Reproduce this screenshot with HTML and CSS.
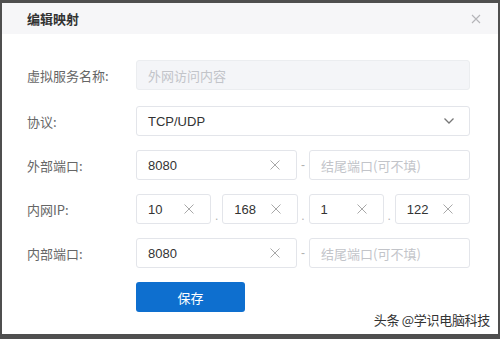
FILE: index.html
```html
<!DOCTYPE html>
<html lang="zh">
<head>
<meta charset="utf-8">
<title>编辑映射</title>
<link rel="stylesheet" href="styles.css">
</head>
<body>
<div class="modal">
  <div class="modal-header">
    <span class="modal-title">编辑映射</span>
    <svg class="close" width="10" height="10" viewBox="0 0 10 10"><path d="M1 1L9 9M9 1L1 9" stroke="#b5b5b8" stroke-width="1.1" fill="none"/></svg>
  </div>
  <div class="form">
    <div class="row row-first">
      <label class="label">虚拟服务名称:</label>
      <div class="field disabled"><span class="placeholder">外网访问内容</span></div>
    </div>
    <div class="row">
      <label class="label">协议:</label>
      <div class="field"><span class="value">TCP/UDP</span>
        <svg class="chev" width="12" height="8" viewBox="0 0 12 8"><path d="M1.5 1.5L6 6L10.5 1.5" stroke="#777" stroke-width="1.3" fill="none"/></svg>
      </div>
    </div>
    <div class="row">
      <label class="label">外部端口:</label>
      <div class="pair">
        <div class="field"><span class="value">8080</span><svg class="clear" width="10" height="10" viewBox="0 0 10 10"><path d="M0.5 0.5L9.5 9.5M9.5 0.5L0.5 9.5" stroke="#a8a8a8" stroke-width="1" fill="none"/></svg></div>
        <span class="sep dash">-</span>
        <div class="field"><span class="placeholder">结尾端口(可不填)</span></div>
      </div>
    </div>
    <div class="row">
      <label class="label">内网IP:</label>
      <div class="pair">
        <div class="field"><span class="value">10</span><svg class="clear" width="10" height="10" viewBox="0 0 10 10"><path d="M0.5 0.5L9.5 9.5M9.5 0.5L0.5 9.5" stroke="#a8a8a8" stroke-width="1" fill="none"/></svg></div>
        <span class="sep dot">.</span>
        <div class="field"><span class="value">168</span><svg class="clear" width="10" height="10" viewBox="0 0 10 10"><path d="M0.5 0.5L9.5 9.5M9.5 0.5L0.5 9.5" stroke="#a8a8a8" stroke-width="1" fill="none"/></svg></div>
        <span class="sep dot">.</span>
        <div class="field"><span class="value">1</span><svg class="clear" width="10" height="10" viewBox="0 0 10 10"><path d="M0.5 0.5L9.5 9.5M9.5 0.5L0.5 9.5" stroke="#a8a8a8" stroke-width="1" fill="none"/></svg></div>
        <span class="sep dot">.</span>
        <div class="field"><span class="value">122</span><svg class="clear" width="10" height="10" viewBox="0 0 10 10"><path d="M0.5 0.5L9.5 9.5M9.5 0.5L0.5 9.5" stroke="#a8a8a8" stroke-width="1" fill="none"/></svg></div>
      </div>
    </div>
    <div class="row">
      <label class="label">内部端口:</label>
      <div class="pair">
        <div class="field"><span class="value">8080</span><svg class="clear" width="10" height="10" viewBox="0 0 10 10"><path d="M0.5 0.5L9.5 9.5M9.5 0.5L0.5 9.5" stroke="#a8a8a8" stroke-width="1" fill="none"/></svg></div>
        <span class="sep dash">-</span>
        <div class="field"><span class="placeholder">结尾端口(可不填)</span></div>
      </div>
    </div>
    <div class="row row-btn">
      <span class="label"></span>
      <button class="btn">保存</button>
    </div>
  </div>
  <div class="watermark">头条 @学识电脑科技</div>
</div>
</body>
</html>
```

FILE: styles.css
```css
html, body {
  margin: 0;
  padding: 0;
}
body {
  background: #4f4f4f;
  width: 500px;
  height: 339px;
  overflow: hidden;
  font-family: "Noto Sans CJK SC", "Liberation Sans", sans-serif;
  padding-top: 3px;
  box-sizing: border-box;
}
.modal {
  position: relative;
  margin: 0 2px 0 2px;
  width: 496px;
  height: 331px;
  background: #ffffff;
  box-sizing: border-box;
}
.modal-header {
  height: 31px;
  background: #f6f6f8;
  display: flex;
  align-items: center;
  justify-content: space-between;
  padding: 0 17px 0 25px;
}
.modal-title {
  font-size: 13px;
  font-weight: bold;
  color: #333;
}
.close {
  display: block;
}
.form {
  padding: 0 28px 0 25px;
}
.row {
  display: flex;
  align-items: center;
  margin-top: 14px;
}
.row-first {
  margin-top: 26px;
}
.row:nth-child(2) {
  margin-top: 16px;
}
.label {
  width: 109px;
  flex: none;
  font-size: 13px;
  color: #666;
}
.field {
  flex: 1;
  height: 30px;
  box-sizing: border-box;
  border: 1px solid #e3e5ea;
  border-radius: 3px;
  display: flex;
  align-items: center;
  justify-content: space-between;
  padding: 0 16px 0 11px;
  font-size: 13px;
  min-width: 0;
}
.field.disabled {
  background: #f4f5f8;
  border-color: #ebedf0;
}
.placeholder {
  color: #c2c4c9;
}
.value {
  color: #333;
  font-family: "Liberation Sans", "Noto Sans CJK SC", sans-serif;
}
.pair {
  flex: 1;
  display: flex;
  align-items: center;
}
.sep {
  width: 11px;
  flex: none;
  text-align: center;
  color: #b0b0b0;
  font-size: 12px;
  font-family: "Liberation Sans", sans-serif;
}
.dash {
  width: 12px;
}
.dot {
  align-self: flex-end;
  line-height: 16px;
}
.chev {
  margin-right: -2px;
}
.row-btn {
  margin-top: 14px;
}
.btn {
  width: 109px;
  height: 30px;
  border: none;
  border-radius: 3px;
  background: #0e6fcf;
  color: #fff;
  font-size: 13px;
  font-family: "Noto Sans CJK SC", sans-serif;
  padding: 0;
}
.watermark {
  position: absolute;
  right: 8px;
  bottom: 5px;
  font-size: 13px;
  color: #333;
  letter-spacing: -0.3px;
}
```
